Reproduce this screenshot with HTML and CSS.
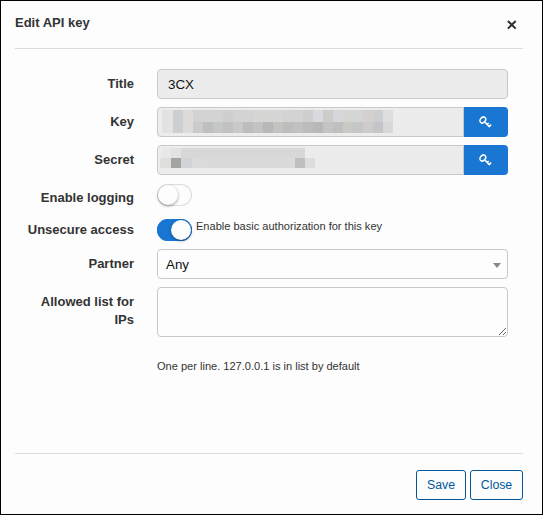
FILE: index.html
```html
<!DOCTYPE html>
<html lang="en">
<head>
<meta charset="utf-8">
<title>Edit API key</title>
<link rel="stylesheet" href="styles.css">
</head>
<body>
<div class="dialog">
  <header class="dialog-header">
    <h1>Edit API key</h1>
    <button class="dismiss" type="button" aria-label="Close">
      <svg width="10" height="10" viewBox="0 0 10 10"><path d="M.9 1 8.7 8.6M8.7 1 .9 8.6" fill="none" stroke="#332b26" stroke-width="2"/></svg>
    </button>
  </header>
  <form class="fields">
    <div class="row">
      <label>Title</label>
      <div class="control box disabled title-box">3CX</div>
    </div>
    <div class="row">
      <label>Key</label>
      <div class="control group">
        <div class="box disabled">
          <svg class="mask" width="233" height="24" viewBox="0 0 233 24" shape-rendering="crispEdges">
            <path fill="#e3e2e2" d="M2 0h11v23H2z"/><path fill="#cdced0" d="M13 0h10v23H13z"/><path fill="#dcdbd9" d="M23 0h10v23H23z"/>
            <path fill="#d3d3d3" d="M33 0h120v12H33z"/><path fill="#d1d3d5" d="M43 0h10v12H43z"/><path fill="#cfcfd0" d="M63 0h10v12H63z"/><path fill="#d6d6d5" d="M93 0h30v12H93z"/><path fill="#cecece" d="M143 0h10v12h-10z"/>
            <path fill="#d9dadd" d="M153 0h10v12h-10z"/><path fill="#cdccca" d="M163 0h10v12h-10z"/><path fill="#d5d7da" d="M173 0h10v12h-10z"/><path fill="#d5d5d2" d="M183 0h10v12h-10z"/><path fill="#d3d6d6" d="M193 0h10v12h-10z"/><path fill="#d3d0ce" d="M203 0h10v12h-10z"/><path fill="#cdced2" d="M213 0h10v12h-10z"/><path fill="#dddfdf" d="M223 0h10v12h-10z"/>
            <path fill="#cbcbcb" d="M33 12h10v11H33z"/><path fill="#bec0bf" d="M43 12h10v11H43z"/><path fill="#c4c6c7" d="M53 12h10v11H53z"/><path fill="#c1c1c1" d="M63 12h10v11H63z"/><path fill="#cac9c8" d="M73 12h10v11H73z"/><path fill="#bdbdbd" d="M83 12h10v11H83z"/><path fill="#c2c3c4" d="M93 12h10v11H93z"/><path fill="#b8b8b8" d="M103 12h10v11h-10z"/>
            <path fill="#c3c3c2" d="M113 12h10v11h-10z"/><path fill="#bebdbb" d="M123 12h10v11h-10z"/><path fill="#c1c1c1" d="M133 12h10v11h-10z"/><path fill="#babcbe" d="M143 12h10v11h-10z"/><path fill="#b8b8b9" d="M153 12h10v11h-10z"/><path fill="#c4c4c2" d="M163 12h10v11h-10z"/><path fill="#c1bfbd" d="M173 12h10v11h-10z"/><path fill="#cbc9c6" d="M183 12h10v11h-10z"/><path fill="#c4c6c8" d="M193 12h10v11h-10z"/><path fill="#cecccb" d="M203 12h10v11h-10z"/><path fill="#c4c5c9" d="M213 12h10v11h-10z"/><path fill="#d8d8d8" d="M223 12h10v11h-10z"/>
          </svg>
        </div>
        <button class="generate" type="button" aria-label="Generate key"><svg width="14" height="14" viewBox="0 0 14 14"><g fill="none" stroke="#fff" stroke-width="1.5"><ellipse cx="4.8" cy="5" rx="2.5" ry="3.3" transform="rotate(40 4.8 5)"/><path d="M6.8 7 11.8 12.1M9 9.6l1.8-1.5M11 11.6l2.2-1.9" stroke-width="1.6"/></g></svg></button>
      </div>
    </div>
    <div class="row">
      <label>Secret</label>
      <div class="control group">
        <div class="box disabled">
          <svg class="mask" width="160" height="24" viewBox="0 0 160 24" shape-rendering="crispEdges">
            <path fill="#e8e8e8" d="M2 0h9v10H2z"/><path fill="#e2e2e2" d="M11 0h11v11H11z"/><path fill="#d8d8d8" d="M21 0h124v11H21z"/>
            <path fill="#dfdfdd" d="M0 10h11v10H0z"/><path fill="#a4a4a2" d="M11 10h10v10H11z"/><path fill="#d1d3d6" d="M21 10h11v10H21z"/><path fill="#dadcdc" d="M32 10h10v10H32z"/><path fill="#dadada" d="M42 10h93v10H42z"/><path fill="#c0bfbd" d="M135 10h10v10h-10z"/><path fill="#dcdddf" d="M145 10h10v10h-10z"/>
          </svg>
        </div>
        <button class="generate" type="button" aria-label="Generate secret"><svg width="14" height="14" viewBox="0 0 14 14"><g fill="none" stroke="#fff" stroke-width="1.5"><ellipse cx="4.8" cy="5" rx="2.5" ry="3.3" transform="rotate(40 4.8 5)"/><path d="M6.8 7 11.8 12.1M9 9.6l1.8-1.5M11 11.6l2.2-1.9" stroke-width="1.6"/></g></svg></button>
      </div>
    </div>
    <div class="row switch-row logging">
      <label>Enable logging</label>
      <div class="control"><span class="switch"><span class="knob"></span></span></div>
    </div>
    <div class="row switch-row">
      <label>Unsecure access</label>
      <div class="control with-note"><span class="switch on"><span class="knob"></span></span><span class="note">Enable basic authorization for this key</span></div>
    </div>
    <div class="row">
      <label>Partner</label>
      <div class="control box select">Any<span class="caret"></span></div>
    </div>
    <div class="row">
      <label>Allowed list for IPs</label>
      <div class="control"><textarea class="box"></textarea><p class="help">One per line. 127.0.0.1 is in list by default</p></div>
    </div>
  </form>
  <footer class="dialog-footer">
    <button class="action save" type="button">Save</button>
    <button class="action" type="button">Close</button>
  </footer>
</div>
</body>
</html>
```

FILE: styles.css
```css
* {
  box-sizing: border-box;
}

body {
  margin: 0;
  font-family: "Liberation Sans", Arial, sans-serif;
  font-size: 13px;
  color: #333;
}

.dialog {
  display: flex;
  flex-direction: column;
  width: 543px;
  height: 515px;
  padding: 0 19px 0 14px;
  border: 1px solid #000;
  background: #fdfdfd;
}

.dialog-header {
  display: flex;
  justify-content: space-between;
  height: 48px;
  padding-top: 12px;
  border-bottom: 1px solid #ddd;
}

h1 {
  margin: 0;
  font-size: 13px;
  line-height: 19px;
}

.dismiss {
  width: 10px;
  height: 10px;
  margin: 7px 6px 0 0;
  padding: 0;
  border: 0;
  background: none;
}

svg {
  display: block;
}

.fields {
  display: flex;
  flex: 1;
  flex-direction: column;
  gap: 8px;
  padding-top: 20px;
}

.row {
  display: grid;
  grid-template-columns: 119px 351px;
  column-gap: 23px;
}

.row label {
  padding: 6px 0 0 10px;
  font-weight: bold;
  line-height: 18px;
  text-align: right;
}

.box {
  height: 30px;
  border: 1px solid #c8c8c8;
  border-radius: 4px;
  background: #fdfdfd;
  color: #111;
  font-size: 13.33px;
  line-height: 29px;
}

.disabled {
  background: #ececec;
}

.title-box {
  padding-left: 10px;
}

.group {
  display: flex;
}

.group .box {
  flex: 1;
  padding: 2px;
  border-radius: 4px 0 0 4px;
}

.generate {
  display: flex;
  width: 44px;
  height: 30px;
  align-items: center;
  justify-content: center;
  padding: 0 2px 0 0;
  border: 0;
  border-radius: 0 4px 4px 0;
  background: #1976d2;
}

.switch-row {
  height: 24px;
}

.switch-row label {
  padding-top: 4px;
}

.switch-row.logging {
  height: 26px;
}

.switch-row.logging label {
  padding-top: 6px;
}

.switch-row .control {
  padding-top: 1px;
}

.with-note {
  display: flex;
  gap: 4px;
}

.switch-row .with-note {
  padding-top: 2px;
}

.switch {
  display: flex;
  flex: none;
  width: 35px;
  height: 22px;
  padding: 1px;
  border-radius: 11px;
  background: #fdfdfd;
  box-shadow: inset 0 0 0 1px #ddd;
}

.switch.on {
  justify-content: flex-end;
  background: #1976d2;
  box-shadow: inset 0 0 0 1px #1976d2;
}

.knob {
  width: 20px;
  height: 20px;
  border-radius: 50%;
  background: #fdfdfd;
  box-shadow: 0 1px 3px rgba(0, 0, 0, 0.4);
}

.note,
.help {
  font-size: 11.05px;
  line-height: 15px;
}

.select {
  display: flex;
  align-items: center;
  justify-content: space-between;
  padding: 0 6px 0 8px;
}

.caret {
  border: 4.5px solid transparent;
  border-top: 5px solid #888;
  border-bottom: 0;
  margin-top: 2px;
}

textarea {
  display: block;
  width: 351px;
}

textarea.box {
  height: 50px;
}

.help {
  margin: 22px 0 0;
}

.dialog-footer {
  display: flex;
  height: 61px;
  justify-content: flex-end;
  gap: 4px;
  padding-top: 16px;
  border-top: 1px solid #ddd;
}

.action {
  width: 53px;
  height: 30px;
  padding: 0;
  border: 1px solid #01579b;
  border-radius: 3px;
  background: #fdfdfd;
  color: #01579b;
  font-family: inherit;
  font-size: 12.3px;
}

.save {
  width: 50px;
}
```
